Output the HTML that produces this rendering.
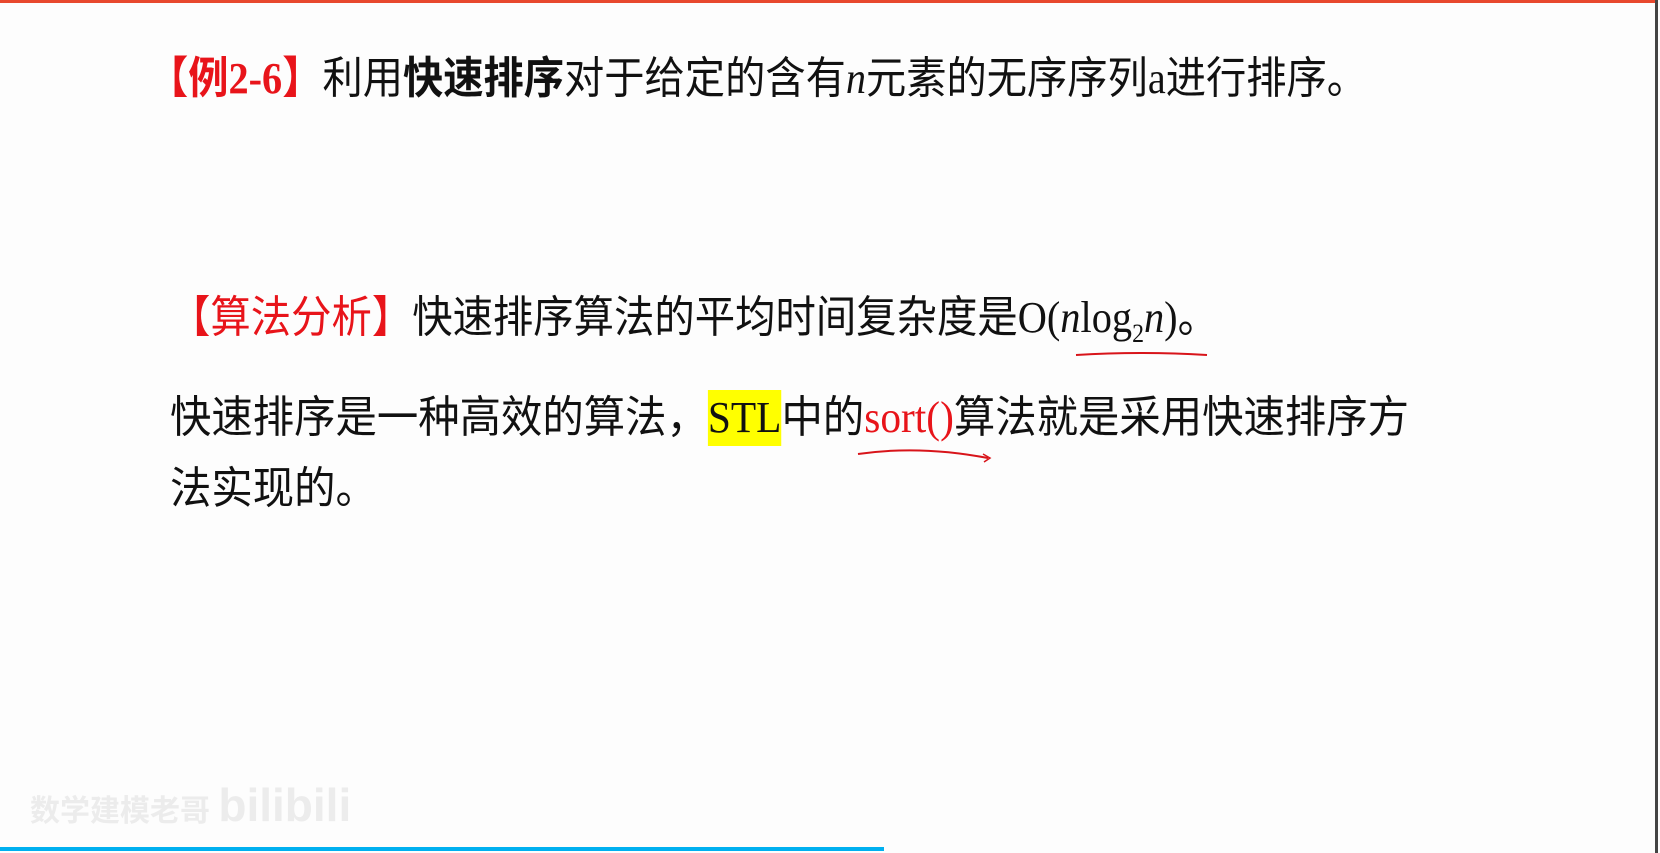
<!DOCTYPE html>
<html><head><meta charset="utf-8">
<style>
html,body{margin:0;padding:0;}
body{width:1660px;height:853px;background:#fdfdfd;position:relative;overflow:hidden;font-family:"Liberation Sans","Noto Sans CJK SC",sans-serif;color:#111;}
.top{position:absolute;left:0;top:0;width:1657px;height:3px;background:#e8482e;}
.rb{position:absolute;left:1655px;top:0;width:3px;height:853px;background:#444;}
.blue{position:absolute;left:0;top:847px;width:884px;height:4px;background:#00b0f0;}
.ln{position:absolute;white-space:nowrap;font-size:44px;line-height:50px;transform-origin:0 50%;}
.r{color:#e8141a;}
.tnr{font-family:"Liberation Serif",serif;}
.b{font-weight:bold;}
.hl{background:#ffff00;}
.wm{position:absolute;left:30px;top:778px;font-size:30px;color:#ececec;font-weight:bold;white-space:nowrap;}
</style></head><body>
<div class="top"></div><div class="rb"></div><div class="blue"></div>

<div class="ln" id="l1" style="left:148px;top:54px;"><span class="r b">【例<span class="tnr">2-6</span>】</span>利用<span class="b">快速排序</span>对于给定的含有<i class="tnr">n</i>元素的无序序列<span class="tnr">a</span>进行排序。</div>

<div class="ln" id="l2" style="left:170px;top:293px;"><span class="r">【算法分析】</span>快速排序算法的平均时间复杂度是<span class="tnr">O(<i>n</i>log<sub style="font-size:26px;">2</sub><i>n</i>)</span>。</div>

<div class="ln" id="l3" style="left:170px;top:393px;">快速排序是一种高效的算法，<span class="tnr hl" style="padding:3px 0 4px;">STL</span>中的<span class="tnr r">sort()</span>算法就是采用快速排序方</div>

<div class="ln" id="l4" style="left:170px;top:464px;">法实现的。</div>

<svg style="position:absolute;left:0;top:0" width="1660" height="853">
<path d="M1076 355 Q1140 351 1207 355" stroke="#d8141a" stroke-width="2" fill="none"/>
<path d="M858 454 Q920 445 988 458" stroke="#d8141a" stroke-width="2" fill="none"/>
<path d="M983 454 L990 458 L984 462" stroke="#d8141a" stroke-width="1.5" fill="none"/>
</svg>

<div class="wm">数学建模老哥 <span style="font-size:46px;font-family:'Liberation Sans',sans-serif;">bilibili</span></div>

<script>
var t={l1:1367-148,l2:1218-170,l3:1409-170};
for(var k in t){var e=document.getElementById(k);var w=e.getBoundingClientRect().width;if(w>0)e.style.transform='scaleX('+(t[k]/w)+')';}
var e4=document.getElementById('l4');var s=t.l3/document.getElementById('l3').scrollWidth;e4.style.transform='scaleX('+s+')';
</script>
</body></html>
